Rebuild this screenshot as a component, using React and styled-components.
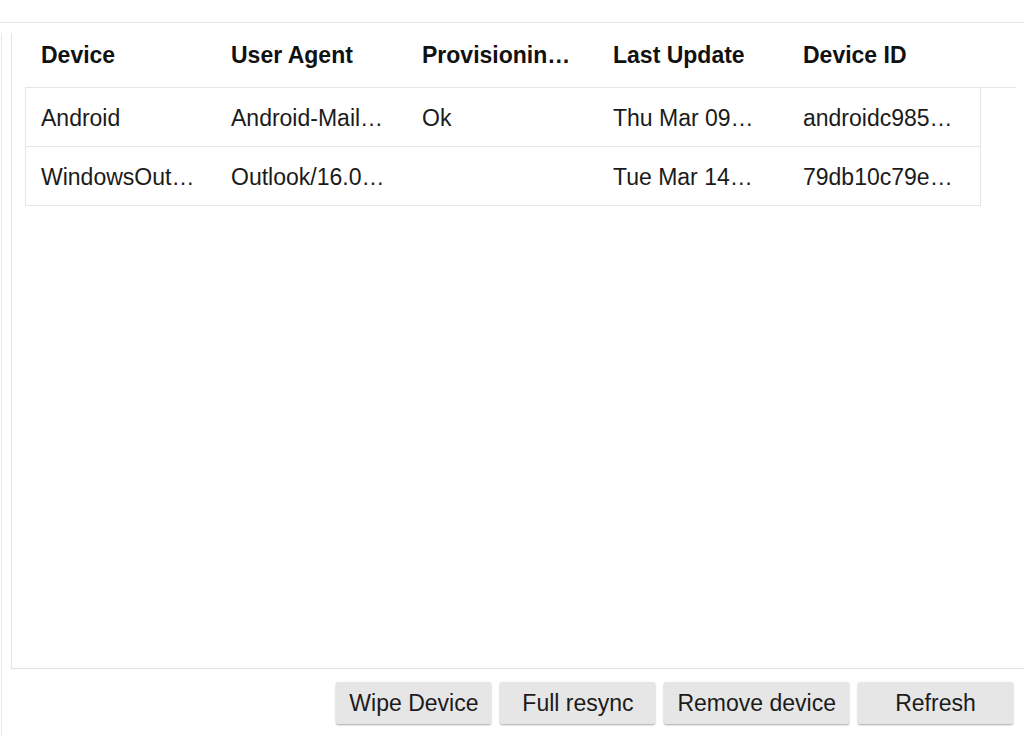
import React from "react";
import styled, { createGlobalStyle } from "styled-components";

const Global = createGlobalStyle`
  html, body { margin: 0; padding: 0; background: #ffffff; }
  body { font-family: "Liberation Sans", Arial, sans-serif; color: #1b1b1b; }
  * { box-sizing: border-box; }
`;

const Page = styled.div`
  width: 1024px;
  height: 736px;
  overflow: hidden;
  display: flex;
  flex-direction: column;
`;

const TopBar = styled.div`
  height: 23px;
  flex: none;
  border-bottom: 1px solid #e4e4e4;
`;

const Main = styled.div`
  flex: 1;
  margin-left: 1px;
  margin-top: 10px;
  border-left: 1px solid #e8e8e8;
  display: flex;
  flex-direction: column;
`;

const Panel = styled.div`
  margin-left: 9px;
  height: 636px;
  border-left: 1px solid #e4e4e4;
  border-bottom: 1px solid #e0e0e0;
  padding: 2px 0 0 13px;
`;

const HeaderRow = styled.div`
  display: flex;
  width: 991px;
  height: 53px;
  border-bottom: 1px solid #e6e6e6;
`;

const HeaderCell = styled.div`
  width: ${(p) => p.$w}px;
  flex: none;
  padding: 7px 16px 0 16px;
  line-height: 26px;
  font-size: 23px;
  font-weight: bold;
  color: #111;
  white-space: nowrap;
  overflow: hidden;
  text-overflow: ellipsis;
`;

const Body = styled.div`
  width: 956px;
  border-left: 1px solid #e6e6e6;
  border-right: 1px solid #e6e6e6;
`;

const Row = styled.div`
  display: flex;
  height: 59px;
  padding-top: 1px;
  align-items: center;
  border-bottom: 1px solid #e6e6e6;
`;

const Cell = styled.div`
  width: ${(p) => p.$w}px;
  flex: none;
  padding: 0 ${(p) => p.$pr}px 0 15px;
  font-size: 23px;
  line-height: 26px;
  color: #1b1b1b;
  white-space: nowrap;
  overflow: hidden;
  text-overflow: ellipsis;
`;

const ButtonBar = styled.div`
  display: flex;
  justify-content: flex-end;
  gap: 9px;
  padding: 13px 11px 0 0;
`;

const Button = styled.button`
  min-width: 155px;
  height: 42px;
  padding: 0 13px;
  border: none;
  border-radius: 2px;
  background: #e6e6e6;
  box-shadow: 0 1px 2px rgba(0, 0, 0, 0.35);
  font-family: "Liberation Sans", Arial, sans-serif;
  font-size: 23px;
  color: #1b1b1b;
  cursor: pointer;
`;

const columns = [
  { title: "Device", head: 190, w: 190, pr: 20 },
  { title: "User Agent", head: 191, w: 191, pr: 21 },
  { title: "Provisioning Status", head: 191, w: 191, pr: 21 },
  { title: "Last Update", head: 190, w: 190, pr: 31 },
  { title: "Device ID", head: 191, w: 192, pr: 22 },
];

const rows = [
  ["Android", "Android-Mail/2023.02.26.512345", "Ok", "Thu Mar 09 2023 14:22:07", "androidc985632187455"],
  ["WindowsOutlook15", "Outlook/16.0.16130.20218", "", "Tue Mar 14 2023 09:11:45", "79db10c79e4a4f2e9c1b"],
];

export default function App() {
  return (
    <>
      <Global />
      <Page>
        <TopBar />
        <Main>
          <Panel>
            <HeaderRow>
              {columns.map((c) => (
                <HeaderCell key={c.title} $w={c.head}>{c.title}</HeaderCell>
              ))}
            </HeaderRow>
            <Body>
              {rows.map((r, i) => (
                <Row key={i}>
                  {r.map((v, j) => (
                    <Cell key={j} $w={columns[j].w} $pr={columns[j].pr}>{v}</Cell>
                  ))}
                </Row>
              ))}
            </Body>
          </Panel>
          <ButtonBar>
            <Button>Wipe Device</Button>
            <Button>Full resync</Button>
            <Button>Remove device</Button>
            <Button>Refresh</Button>
          </ButtonBar>
        </Main>
      </Page>
    </>
  );
}
